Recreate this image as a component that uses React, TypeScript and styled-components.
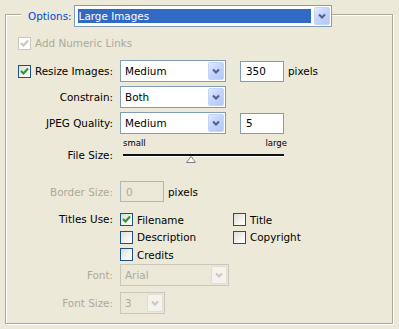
import styled, { createGlobalStyle } from "styled-components";

const Global = createGlobalStyle`
  html, body {
    margin: 0;
    padding: 0;
    background: #ece9d8;
  }
  body {
    width: 399px;
    height: 329px;
    overflow: hidden;
    font-family: "DejaVu Sans", "Liberation Sans", sans-serif;
    font-size: 10.4px;
    color: #000;
  }
`;

const Page = styled.div`
  padding-top: 14px;
`;

const Frame = styled.div`
  box-sizing: border-box;
  margin-left: 5px;
  width: 388px;
  height: 310px;
  border: 1px solid #aca899;
  box-shadow: inset 1px 1px 0 #fff, 1px 1px 0 #fff;
`;

const Legend = styled.div`
  display: flex;
  align-items: center;
  gap: 2px;
  width: fit-content;
  margin: -10px 0 0 15px;
  padding-left: 7px;
  background: #ece9d8;
`;

const LegendText = styled.span`
  color: #0046d5;
`;

const Row = styled.div<{ $h: number; $mt: number }>`
  display: grid;
  grid-template-columns: 107px auto;
  column-gap: 7px;
  align-items: center;
  height: ${(p) => p.$h}px;
  margin-top: ${(p) => p.$mt}px;
`;

const FreeRow = styled.div<{ $h: number; $mt: number }>`
  display: flex;
  align-items: center;
  gap: 4px;
  height: ${(p) => p.$h}px;
  margin-top: ${(p) => p.$mt}px;
  padding-left: 12px;
`;

const Label = styled.div<{ $disabled?: boolean }>`
  display: flex;
  align-items: center;
  justify-content: flex-end;
  gap: 4px;
  color: ${(p) => (p.$disabled ? "#aca899" : "#000")};
  white-space: nowrap;
`;

const Controls = styled.div<{ $gap?: number }>`
  display: flex;
  align-items: center;
  gap: ${(p) => p.$gap ?? 4}px;
`;

const Text = styled.span<{ $disabled?: boolean }>`
  color: ${(p) => (p.$disabled ? "#aca899" : "#000")};
  white-space: nowrap;
`;

const ComboBox = styled.div<{ $w: number; $disabled?: boolean }>`
  box-sizing: border-box;
  display: flex;
  align-items: stretch;
  width: ${(p) => p.$w}px;
  height: 22px;
  padding: 1px;
  border: 1px solid ${(p) => (p.$disabled ? "#c9c7ba" : "#7f9db9")};
  background: ${(p) => (p.$disabled ? "#ebe8d8" : "#fff")};
`;

const ComboValue = styled.div<{ $selected?: boolean; $disabled?: boolean }>`
  flex: 1;
  display: flex;
  align-items: center;
  margin: ${(p) => (p.$selected ? "2px 3px 2px 2px" : "0")};
  padding-left: ${(p) => (p.$selected ? 1 : 3)}px;
  background: ${(p) => (p.$selected ? "#316ac5" : "transparent")};
  color: ${(p) => (p.$selected ? "#fff" : p.$disabled ? "#aca899" : "#000")};
  white-space: nowrap;
`;

const ComboButton = styled.div<{ $disabled?: boolean }>`
  box-sizing: border-box;
  width: 16px;
  display: flex;
  align-items: center;
  justify-content: center;
  border: 1px solid ${(p) => (p.$disabled ? "#e0ded3" : "#c3d3fd")};
  border-radius: 2px;
  background: ${(p) =>
    p.$disabled
      ? "#f4f3ee"
      : "linear-gradient(135deg, #e2ebfe 0%, #c4d5fc 45%, #b3c7f6 100%)"};
`;

const Chevron = ({ disabled }: { disabled?: boolean }) => (
  <svg width="8" height="6" viewBox="0 0 8 6">
    <path
      d="M1 1.5 L4 4.5 L7 1.5"
      fill="none"
      stroke={disabled ? "#c9c7ba" : "#4d6185"}
      strokeWidth="2"
    />
  </svg>
);

const Combo = ({
  value,
  width,
  disabled,
  selected,
}: {
  value: string;
  width: number;
  disabled?: boolean;
  selected?: boolean;
}) => (
  <ComboBox $w={width} $disabled={disabled}>
    <ComboValue $selected={selected} $disabled={disabled}>
      {value}
    </ComboValue>
    <ComboButton $disabled={disabled}>
      <Chevron disabled={disabled} />
    </ComboButton>
  </ComboBox>
);

const Field = styled.div<{ $w: number; $disabled?: boolean }>`
  box-sizing: border-box;
  display: flex;
  align-items: center;
  width: ${(p) => p.$w}px;
  height: 21px;
  padding-left: 5px;
  border: 1px solid ${(p) => (p.$disabled ? "#a9b6c4" : "#7f9db9")};
  background: ${(p) => (p.$disabled ? "#ebe8d8" : "#fff")};
  color: ${(p) => (p.$disabled ? "#aca899" : "#000")};
`;

const Box = styled.span<{ $disabled?: boolean }>`
  box-sizing: border-box;
  flex: none;
  display: inline-flex;
  align-items: center;
  justify-content: center;
  width: 13px;
  height: 13px;
  border: 1px solid ${(p) => (p.$disabled ? "#cac8bb" : "#1c5180")};
  background: ${(p) =>
    p.$disabled ? "#fff" : "linear-gradient(135deg, #dcdcd7 0%, #f4f4f2 60%, #fff 100%)"};
`;

const Check = ({ checked, disabled }: { checked?: boolean; disabled?: boolean }) => (
  <Box $disabled={disabled}>
    {checked && (
      <svg width="9" height="9" viewBox="0 0 9 9">
        <path
          d="M1 4 L3.5 6.5 L8 1.5"
          fill="none"
          stroke={disabled ? "#cac8bb" : "#21a121"}
          strokeWidth="2.2"
        />
      </svg>
    )}
  </Box>
);

const CheckItem = styled.div`
  display: flex;
  align-items: center;
  gap: 4px;
  height: 17.5px;
`;

const CheckGrid = styled.div`
  display: grid;
  grid-template-columns: 113px auto;
  margin-top: 9px;
`;

const TitlesLabel = styled(Label)`
  align-self: start;
  height: 17px;
`;

const TitlesRow = styled.div`
  display: grid;
  grid-template-columns: 107px auto;
  column-gap: 7px;
`;

const ScaleLabels = styled.div`
  display: flex;
  justify-content: space-between;
  width: 164px;
  padding-left: 3px;
  font-size: 8.5px;
  color: #000;
`;

const Track = styled.div`
  position: relative;
  margin-left: 3px;
  width: 161px;
  height: 2px;
  background: #111;
  box-shadow: 0 1px 0 #fff;
`;

const Thumb = styled.svg`
  position: absolute;
  top: 2px;
`;

const Slider = ({ pos }: { pos: number }) => (
  <Track>
    <Thumb width="10" height="7" viewBox="0 0 10 7" style={{ left: pos - 5 }}>
      <path d="M5 0.5 L9.5 6.5 L0.5 6.5 Z" fill="#fff" stroke="#808080" />
    </Thumb>
  </Track>
);

export default function App() {
  return (
    <Page>
      <Global />
      <Frame>
        <Legend>
          <LegendText>Options:</LegendText>
          <Combo value="Large Images" width={258} selected />
        </Legend>

        <FreeRow $h={20} $mt={6}>
          <Check checked disabled />
          <Text $disabled>Add Numeric Links</Text>
        </FreeRow>

        <Row $h={22} $mt={7}>
          <Label>
            <Check checked />
            Resize Images:
          </Label>
          <Controls $gap={14}>
            <Combo value="Medium" width={106} />
            <Controls>
              <Field $w={44}>350</Field>
              <Text>pixels</Text>
            </Controls>
          </Controls>
        </Row>

        <Row $h={22} $mt={4}>
          <Label>Constrain:</Label>
          <Controls>
            <Combo value="Both" width={106} />
          </Controls>
        </Row>

        <Row $h={22} $mt={4}>
          <Label>JPEG Quality:</Label>
          <Controls $gap={14}>
            <Combo value="Medium" width={106} />
            <Field $w={44}>5</Field>
          </Controls>
        </Row>

        <Row $h={12} $mt={3}>
          <span />
          <ScaleLabels>
            <span>small</span>
            <span>large</span>
          </ScaleLabels>
        </Row>

        <Row $h={12} $mt={0}>
          <Label>File Size:</Label>
          <Slider pos={68} />
        </Row>

        <Row $h={21} $mt={20}>
          <Label $disabled>Border Size:</Label>
          <Controls>
            <Field $w={44} $disabled>
              0
            </Field>
            <Text>pixels</Text>
          </Controls>
        </Row>

        <TitlesRow>
          <TitlesLabel>
            <span style={{ marginTop: 16 }}>Titles Use:</span>
          </TitlesLabel>
          <CheckGrid>
            <CheckItem>
              <Check checked />
              <Text>Filename</Text>
            </CheckItem>
            <CheckItem>
              <Check />
              <Text>Title</Text>
            </CheckItem>
            <CheckItem>
              <Check />
              <Text>Description</Text>
            </CheckItem>
            <CheckItem>
              <Check />
              <Text>Copyright</Text>
            </CheckItem>
            <CheckItem>
              <Check />
              <Text>Credits</Text>
            </CheckItem>
          </CheckGrid>
        </TitlesRow>

        <Row $h={22} $mt={0}>
          <Label $disabled>Font:</Label>
          <Controls>
            <Combo value="Arial" width={109} disabled />
          </Controls>
        </Row>

        <Row $h={22} $mt={6}>
          <Label $disabled>Font Size:</Label>
          <Controls>
            <Combo value="3" width={45} disabled />
          </Controls>
        </Row>
      </Frame>
    </Page>
  );
}
